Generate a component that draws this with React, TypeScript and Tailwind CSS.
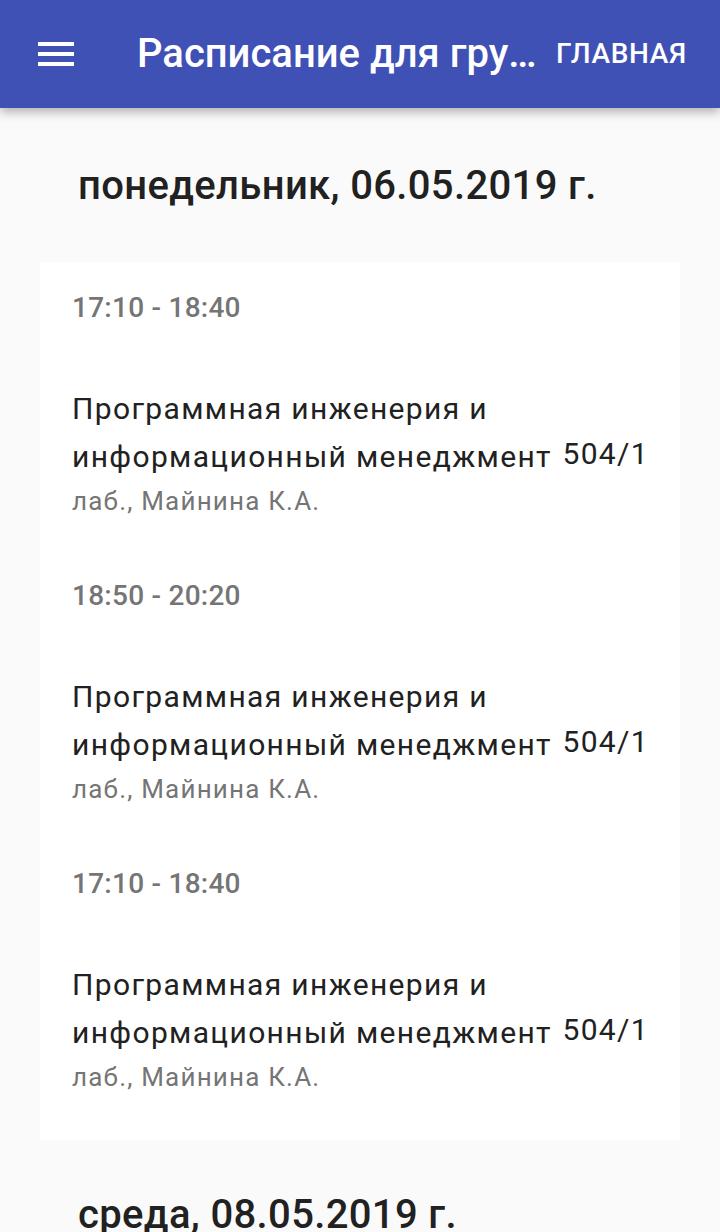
const lessons = [
  { time: "17:10 - 18:40", title: "Программная инженерия и информационный менеджмент", room: "504/1", info: "лаб., Майнина К.А." },
  { time: "18:50 - 20:20", title: "Программная инженерия и информационный менеджмент", room: "504/1", info: "лаб., Майнина К.А." },
  { time: "17:10 - 18:40", title: "Программная инженерия и информационный менеджмент", room: "504/1", info: "лаб., Майнина К.А." },
];

const days = [
  { label: "понедельник, 06.05.2019 г.", lessons },
  { label: "среда, 08.05.2019 г.", lessons: lessons.slice(0, 1) },
];

const MenuIcon = () => (
  <svg width="48" height="48" viewBox="0 0 24 24" fill="#ffffff">
    <path d="M3 18h18v-2H3v2zm0-5h18v-2H3v2zm0-7v2h18V6H3z" />
  </svg>
);

export default function App() {
  return (
    <div className="h-[1232px] overflow-hidden bg-[#fafafa] font-['Roboto',sans-serif]">
      <header className="relative z-10 h-[108px] bg-[#3f51b5] flex items-center pl-[32px] pr-[17px] shadow-[0_4px_10px_rgba(0,0,0,0.3)]">
        <button className="w-[48px] h-[48px] flex items-center justify-center shrink-0">
          <MenuIcon />
        </button>
        <h1 className="ml-[57px] flex-1 min-w-0 truncate text-white text-[40px] font-medium leading-[48px]">
          Расписание для группы ПИ-16
        </h1>
        <button className="px-[16px] text-white text-[28px] font-medium leading-[36px] tracking-[0.7px] uppercase shrink-0">
          Главная
        </button>
      </header>

      <main className="pt-[54px] flex flex-col gap-[51px]">
        {days.map((day, d) => (
          <section key={d}>
            <h2 className="pl-[78px] mb-[52px] text-[40px] leading-[48px] font-medium tracking-[0.35px] text-[#212121]">
              {day.label}
            </h2>
            <div className="mx-[40px] bg-white px-[32px] pt-[30px] pb-[46px] flex flex-col gap-[62px]">
              {day.lessons.map((l, i) => (
                <div key={i}>
                  <div className="text-[28px] leading-[32px] font-medium tracking-[0.25px] text-[#757575] mb-[61px]">
                    {l.time}
                  </div>
                  <div className="flex items-end justify-between">
                    <div className="text-[30px] leading-[48px] tracking-[1.35px] text-[#212121] pr-[8px]">{l.title}</div>
                    <div className="mb-[3px] -mr-[1px] text-[30px] leading-[48px] tracking-[1.35px] text-[#212121] shrink-0">
                      {l.room}
                    </div>
                  </div>
                  <div className="mt-[3px] text-[26px] leading-[34px] tracking-[1.2px] text-[#757575]">{l.info}</div>
                </div>
              ))}
            </div>
          </section>
        ))}
      </main>
    </div>
  );
}
